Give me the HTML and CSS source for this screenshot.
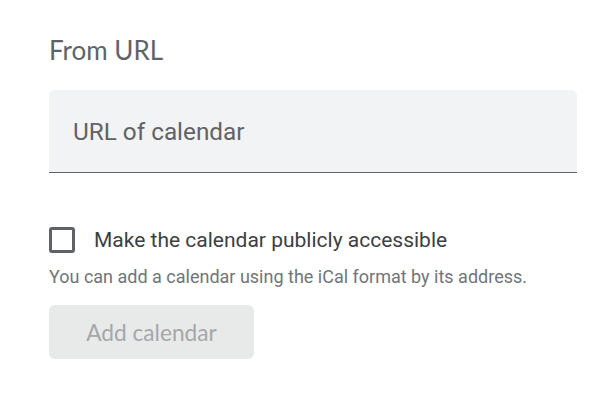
FILE: index.html
```html
<!DOCTYPE html>
<html>
<head>
<meta charset="utf-8">
<link rel="stylesheet" href="styles.css">
</head>
<body>
<div class="page">
  <h2 class="title">From URL</h2>
  <div class="field">
    <span class="placeholder">URL of calendar</span>
  </div>
  <label class="check-row">
    <span class="box"></span>
    <span class="check-label">Make the calendar publicly accessible</span>
  </label>
  <p class="help">You can add a calendar using the iCal format by its address.</p>
  <button class="add-btn">Add calendar</button>
</div>
</body>
</html>
```

FILE: styles.css
```css
html, body {
  margin: 0;
  padding: 0;
  background: #ffffff;
}
.page {
  padding: 35px 38px 0 49px;
  font-family: Roboto, "Liberation Sans", sans-serif;
}
.title {
  margin: 0;
  font-family: Lato, "Open Sans", sans-serif;
  font-weight: 400;
  font-size: 26px;
  line-height: 30px;
  color: #5f6368;
}
.field {
  margin-top: 25px;
  width: 528px;
  height: 83px;
  box-sizing: border-box;
  background: #f1f3f4;
  border-radius: 6px 6px 0 0;
  border-bottom: 1.4px solid #5f6368;
  display: flex;
  align-items: center;
  padding-left: 24px;
}
.placeholder {
  font-size: 24.3px;
  color: #5f6368;
}
.check-row {
  margin-top: 53px;
  display: flex;
  align-items: center;
  height: 27px;
}
.box {
  width: 26px;
  height: 26px;
  box-sizing: border-box;
  border: 3px solid #5f6368;
  border-radius: 3px;
  flex: none;
}
.check-label {
  margin-left: 19px;
  font-size: 21px;
  color: #3c4043;
}
.help {
  margin: 14px 0 0;
  font-size: 18px;
  line-height: 20px;
  color: #70757a;
}
.add-btn {
  display: block;
  margin-top: 18px;
  width: 205px;
  height: 54px;
  border: none;
  border-radius: 6px;
  background: #e8e9e9;
  color: #a5a7a9;
  font-family: Lato, "Open Sans", sans-serif;
  font-size: 22.7px;
  padding: 0;
}
```
